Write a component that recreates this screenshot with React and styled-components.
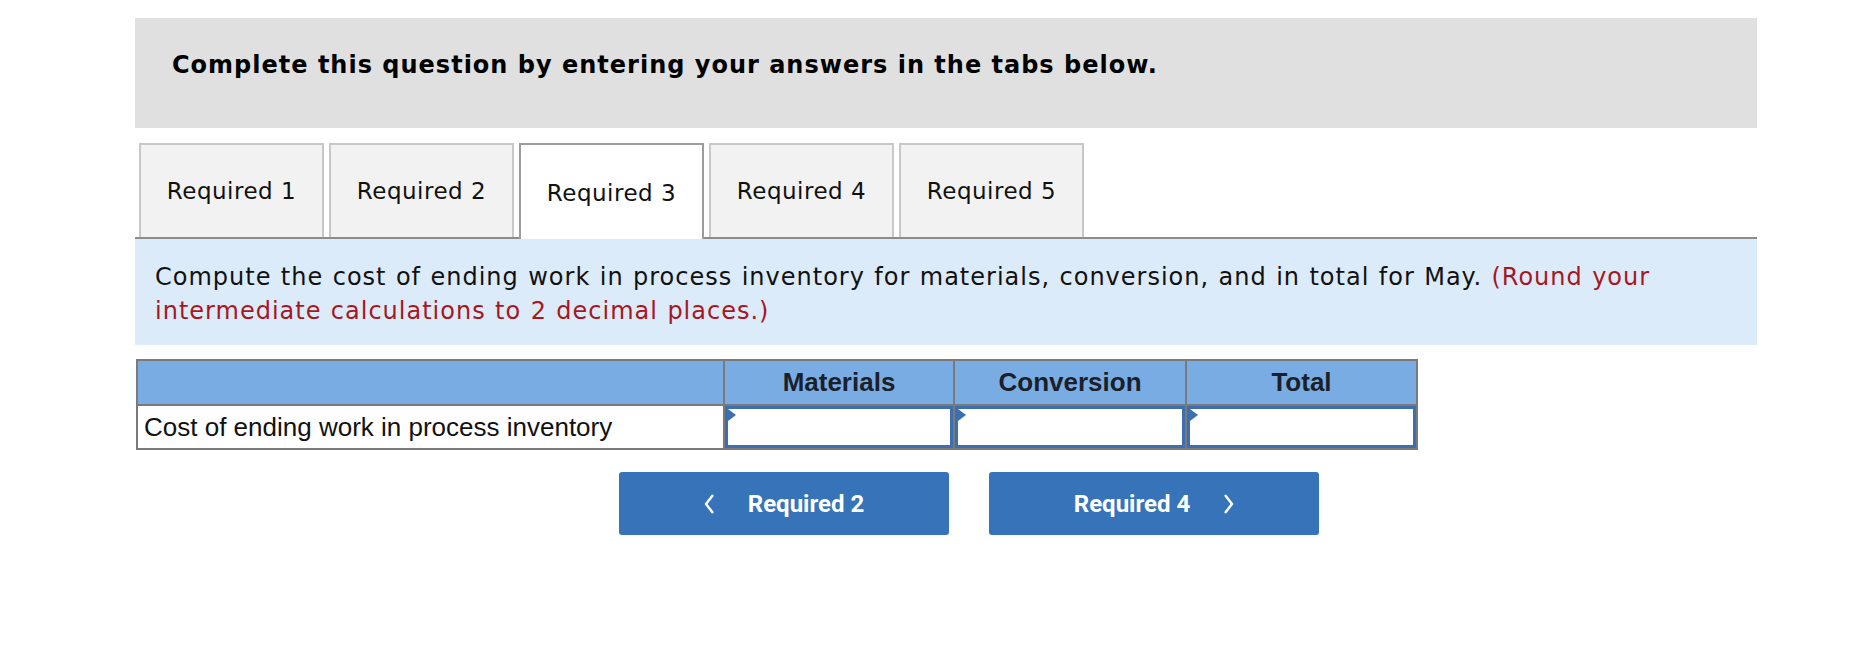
import React from 'react';
import styled, { createGlobalStyle } from 'styled-components';

const GlobalStyle = createGlobalStyle`
  body {
    margin: 0;
    background: #fff;
  }
`;

const tabs = ['Required 1', 'Required 2', 'Required 3', 'Required 4', 'Required 5'];
const columns = ['Materials', 'Conversion', 'Total'];

function Chevron({ dir }) {
  const points = dir === 'left' ? '9,2 2,11 9,20' : '2,2 9,11 2,20';
  return (
    <svg width="11" height="22" viewBox="0 0 11 22">
      <polyline points={points} fill="none" stroke="#fff" strokeWidth="2.4" />
    </svg>
  );
}

function App() {
  return (
    <Page>
      <GlobalStyle />
      <Banner>Complete this question by entering your answers in the tabs below.</Banner>
      <TabBar>
        {tabs.map(t => (
          <Tab key={t} active={t === 'Required 3'}>
            {t}
          </Tab>
        ))}
      </TabBar>
      <Prompt>
        Compute the cost of ending work in process inventory for materials, conversion, and in
        total for May. <Hint>(Round your intermediate calculations to 2 decimal places.)</Hint>
      </Prompt>
      <Table>
        <colgroup>
          <col style={{ width: 587 }} />
          <col style={{ width: 230 }} />
          <col style={{ width: 232 }} />
          <col style={{ width: 231 }} />
        </colgroup>
        <thead>
          <tr>
            <HeadCell />
            {columns.map(c => (
              <HeadCell key={c}>{c}</HeadCell>
            ))}
          </tr>
        </thead>
        <tbody>
          <tr>
            <LabelCell>Cost of ending work in process inventory</LabelCell>
            {columns.map(c => (
              <InputCell key={c}>
                <Input type="text" aria-label={c} />
              </InputCell>
            ))}
          </tr>
        </tbody>
      </Table>
      <Nav>
        <NavButton>
          <Chevron dir="left" />
          <span>Required 2</span>
        </NavButton>
        <NavButton>
          <span>Required 4</span>
          <Chevron dir="right" />
        </NavButton>
      </Nav>
    </Page>
  );
}

const Page = styled.div`
  width: 1622px;
  padding: 18px 0 40px 135px;
`;

const Banner = styled.div`
  box-sizing: border-box;
  height: 110px;
  padding: 33px 37px;
  background: #e0e0e0;
  color: #000;
  font-family: 'DejaVu Sans', Verdana, sans-serif;
  font-weight: bold;
  font-size: 24px;
  letter-spacing: 1px;
  line-height: 28px;
`;

const TabBar = styled.div`
  display: flex;
  align-items: flex-end;
  gap: 5px;
  margin-top: 15px;
  padding-left: 4px;
  height: 94px;
  border-bottom: 2px solid #8c8c8c;
`;

const Tab = styled.div`
  box-sizing: border-box;
  width: 185px;
  height: ${props => (props.active ? '96px' : '94px')};
  margin-bottom: ${props => (props.active ? '-2px' : '0')};
  padding-top: ${props => (props.active ? '2px' : '0')};
  display: flex;
  justify-content: center;
  align-items: center;
  border: 2px solid ${props => (props.active ? '#9c9c9c' : '#c8c8c8')};
  border-bottom: none;
  background: ${props => (props.active ? '#fff' : '#f2f2f2')};
  color: #111;
  font-family: 'DejaVu Sans', Verdana, sans-serif;
  font-size: 23px;
  letter-spacing: 0.5px;
`;

const Prompt = styled.div`
  padding: 21px 20px 17px;
  background: #dcebf9;
  color: #111;
  font-family: 'DejaVu Sans', Verdana, sans-serif;
  font-size: 24px;
  letter-spacing: 1px;
  word-spacing: 0.8px;
  line-height: 34px;
`;

const Hint = styled.span`
  color: #a8161f;
`;

const Table = styled.table`
  margin-top: 14px;
  margin-left: 1px;
  width: 1280px;
  table-layout: fixed;
  border-collapse: collapse;
  font-family: 'Liberation Sans', Arial, sans-serif;
  border: 2px solid #7a7a7a;
`;

const HeadCell = styled.th`
  height: 43px;
  padding: 0;
  background: #79ace2;
  border: 2px solid #7a7a7a;
  color: #1b1f2a;
  font-size: 26px;
  font-weight: bold;
  text-align: center;
`;

const LabelCell = styled.td`
  height: 42px;
  padding: 0 6px;
  border: 2px solid #7a7a7a;
  color: #111;
  font-size: 26px;
  white-space: nowrap;
`;

const InputCell = styled.td`
  position: relative;
  padding: 0;
  border: 2px solid #7a7a7a;
  &::before {
    content: '';
    position: absolute;
    top: 3px;
    left: 3px;
    border-top: 6px solid transparent;
    border-bottom: 6px solid transparent;
    border-left: 8px solid #3d6fae;
  }
`;

const Input = styled.input`
  display: block;
  box-sizing: border-box;
  width: 100%;
  height: 42px;
  margin: 0;
  border: 3px solid #3d6fae;
  background: #fff;
  outline: none;
`;

const Nav = styled.div`
  display: flex;
  gap: 40px;
  margin-top: 22px;
  padding-left: 484px;
`;

const NavButton = styled.button`
  display: flex;
  justify-content: center;
  align-items: center;
  gap: 33px;
  width: 330px;
  height: 63px;
  border: none;
  border-radius: 3px;
  background: #3673b9;
  color: #fff;
  font-family: Roboto, 'Liberation Sans', sans-serif;
  font-weight: bold;
  font-size: 24px;
  cursor: pointer;
`;

export default App;
